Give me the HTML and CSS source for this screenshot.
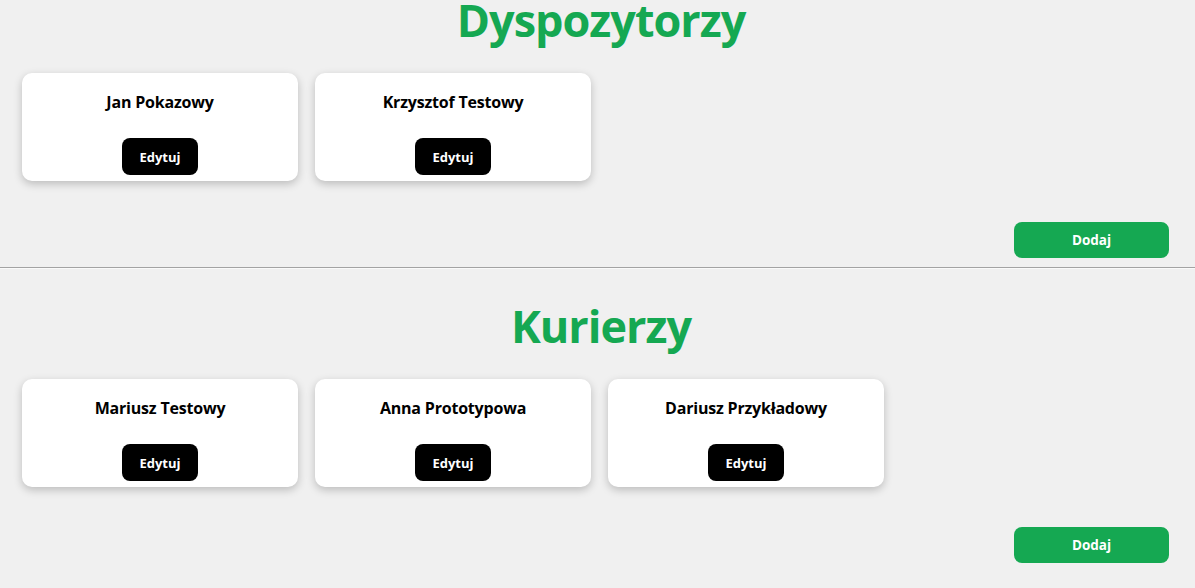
FILE: index.html
```html
<!DOCTYPE html>
<html lang="pl">
<head>
<meta charset="utf-8">
<title>Panel</title>
<link rel="stylesheet" href="styles.css">
</head>
<body>
<section class="section first">
  <h1 class="title">Dyspozytorzy</h1>
  <div class="cards">
    <div class="card"><h3 class="name">Jan Pokazowy</h3><button class="edit">Edytuj</button></div>
    <div class="card"><h3 class="name">Krzysztof Testowy</h3><button class="edit">Edytuj</button></div>
  </div>
  <div class="actions"><button class="add">Dodaj</button></div>
</section>
<hr class="divider">
<section class="section">
  <h1 class="title">Kurierzy</h1>
  <div class="cards">
    <div class="card"><h3 class="name">Mariusz Testowy</h3><button class="edit">Edytuj</button></div>
    <div class="card"><h3 class="name">Anna Prototypowa</h3><button class="edit">Edytuj</button></div>
    <div class="card"><h3 class="name">Dariusz Przykładowy</h3><button class="edit">Edytuj</button></div>
  </div>
  <div class="actions"><button class="add">Dodaj</button></div>
</section>
</body>
</html>
```
FILE: styles.css
```css
html, body {
  margin: 0;
  padding: 0;
  background: #f0f0f0;
  font-family: "Open Sans", "Noto Sans", sans-serif;
  color: #000;
}
.section {
  padding: 0 26px 0 22px;
}
.section:not(.first) {
  padding-top: 37px;
}
.title {
  margin: 0;
  padding-left: 11px;
  text-align: center;
  color: #15a852;
  font-size: 45px;
  font-weight: 700;
  line-height: 40px;
  letter-spacing: -1px;
}
.cards {
  margin-top: 33px;
  display: grid;
  grid-template-columns: repeat(auto-fill, 276px);
  gap: 17px;
}
.card {
  background: #fff;
  border-radius: 10px;
  box-shadow: 0 3px 8px rgba(0, 0, 0, 0.22);
  height: 108px;
  box-sizing: border-box;
  padding-top: 18px;
  display: flex;
  flex-direction: column;
  align-items: center;
}
.name {
  margin: 0;
  font-size: 16px;
  font-weight: 700;
  line-height: 22px;
  letter-spacing: -0.2px;
}
.edit {
  margin-top: 25px;
  height: 37px;
  width: 76px;
  border: none;
  border-radius: 8px;
  background: #000;
  color: #fff;
  font-family: inherit;
  font-size: 13px;
  font-weight: 700;
  padding: 0;
}
.actions {
  display: flex;
  justify-content: flex-end;
  margin-top: 40px;
}
.first .actions {
  margin-top: 41px;
}
.add {
  width: 155px;
  height: 36px;
  border: none;
  border-radius: 8px;
  background: #15a852;
  color: #fff;
  font-family: inherit;
  font-size: 13.5px;
  font-weight: 700;
  padding: 0;
}
.divider {
  margin: 9px 0 0;
  border: none;
  border-top: 1px solid #a3a3a3;
  border-bottom: 1px solid #fafafa;
}
```
